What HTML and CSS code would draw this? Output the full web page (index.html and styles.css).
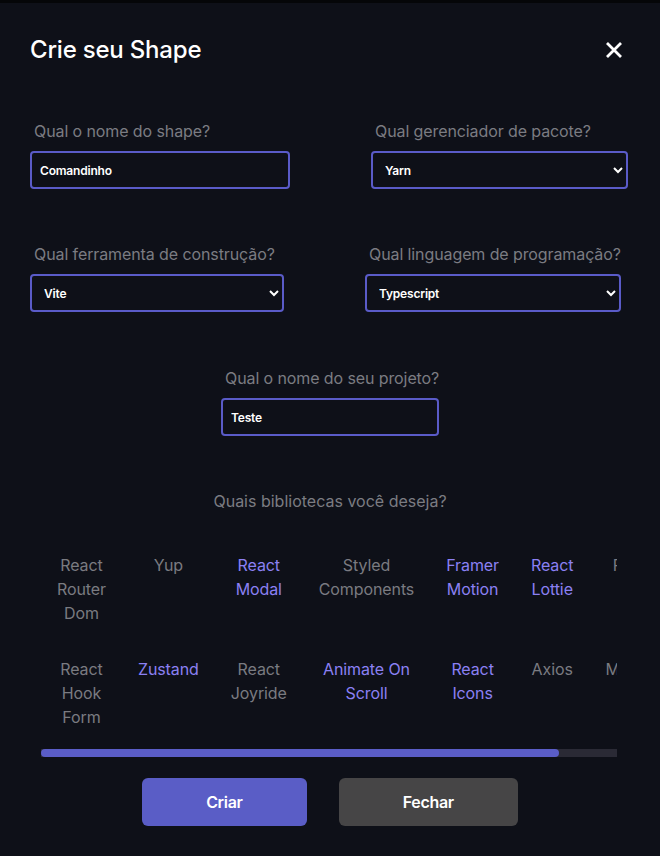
FILE: index.html
```html
<!DOCTYPE html>
<html lang="pt-BR">
<head>
<meta charset="utf-8">
<title>Crie seu Shape</title>
<link rel="stylesheet" href="styles.css">
</head>
<body>
<div class="modal">
  <header class="header">
    <h1 class="title">Crie seu Shape</h1>
    <button class="close" aria-label="Fechar">
      <svg width="18" height="18" viewBox="0 0 18 18"><path d="M2 2 L16 16 M16 2 L2 16" stroke="#fff" stroke-width="2.8" stroke-linecap="butt"/></svg>
    </button>
  </header>

  <div class="row row-1">
    <div class="field w260">
      <label class="label">Qual o nome do shape?</label>
      <input class="control" type="text" value="Comandinho">
    </div>
    <div class="field w257">
      <label class="label">Qual gerenciador de pacote?</label>
      <select class="control"><option>Yarn</option><option>npm</option></select>
    </div>
  </div>

  <div class="row row-2">
    <div class="field w254">
      <label class="label">Qual ferramenta de construção?</label>
      <select class="control"><option>Vite</option><option>CRA</option></select>
    </div>
    <div class="field w256">
      <label class="label">Qual linguagem de programação?</label>
      <select class="control"><option>Typescript</option><option>Javascript</option></select>
    </div>
  </div>

  <div class="row row-3">
    <div class="field w218">
      <label class="label">Qual o nome do seu projeto?</label>
      <input class="control" type="text" value="Teste">
    </div>
  </div>

  <p class="libs-title">Quais bibliotecas você deseja?</p>

  <div class="libs">
    <div class="libs-viewport">
      <div class="libs-grid">
        <span class="lib">React Router Dom</span>
        <span class="lib">React Hook Form</span>
        <span class="lib">Yup</span>
        <span class="lib active">Zustand</span>
        <span class="lib active">React Modal</span>
        <span class="lib">React Joyride</span>
        <span class="lib">Styled Components</span>
        <span class="lib active">Animate On Scroll</span>
        <span class="lib active">Framer Motion</span>
        <span class="lib active">React Icons</span>
        <span class="lib active">React Lottie</span>
        <span class="lib">Axios</span>
        <span class="lib">Redux</span>
        <span class="lib">Moment</span>
      </div>
    </div>
    <div class="scrollbar"><div class="scrollbar-thumb" style="width: 518px"></div></div>
  </div>

  <div class="actions">
    <button class="btn btn-primary">Criar</button>
    <button class="btn btn-secondary">Fechar</button>
  </div>
</div>
</body>
</html>
```

FILE: styles.css
```css
html, body {
  margin: 0;
  padding: 0;
  background: #0e1018;
}

body {
  border-top: 3px solid #050608;
  font-family: Inter, "Noto Sans", sans-serif;
  color-scheme: dark;
}

.modal {
  width: 660px;
  height: 853px;
  display: flex;
  flex-direction: column;
}

.header {
  display: flex;
  justify-content: space-between;
  align-items: center;
  height: 30px;
  padding: 32px 37px 0 30px;
}

.title {
  margin: 0;
  font-family: Inter, "Noto Sans", sans-serif;
  font-weight: 500;
  font-size: 24px;
  color: #ffffff;
  line-height: 30px;
  letter-spacing: -0.2px;
}

.close {
  background: none;
  border: none;
  padding: 0;
  width: 18px;
  height: 18px;
  display: flex;
  cursor: pointer;
}

.row {
  display: flex;
  gap: 81px;
  padding-left: 30px;
}

.row-1 { margin-top: 56px; }
.row-2 { margin-top: 55px; }
.row-3 { margin-top: 56px; justify-content: center; padding-left: 0; }

.field {
  display: flex;
  flex-direction: column;
  gap: 10px;
}

.w260 { width: 260px; }
.w257 { width: 257px; }
.w254 { width: 254px; }
.w256 { width: 256px; }
.w218 { width: 218px; }

.label {
  padding-left: 4px;
  font-size: 16px;
  line-height: 20px;
  color: #7b7c82;
  white-space: nowrap;
  letter-spacing: -0.1px;
}

.control {
  box-sizing: border-box;
  width: 100%;
  height: 38px;
  margin: 0;
  padding: 0 8px;
  border: 2px solid #5a5bc8;
  border-radius: 4px;
  background: #0e1018;
  color: #ffffff;
  font-family: Inter, "Noto Sans", sans-serif;
  font-weight: 600;
  font-size: 12px;
  letter-spacing: -0.2px;
  outline: none;
}

.libs-title {
  margin: 55px 0 0;
  text-align: center;
  font-size: 16px;
  line-height: 20px;
  color: #7b7c82;
}

.libs {
  margin: 42px 43px 0 41px;
  display: flex;
  flex-direction: column;
  gap: 20px;
}

.libs-viewport {
  overflow: hidden;
}

.libs-grid {
  display: grid;
  grid-template-rows: auto auto;
  grid-auto-flow: column;
  grid-auto-columns: min-content;
  row-gap: 32px;
  width: max-content;
}

.lib {
  padding: 0 16px;
  text-align: center;
  font-size: 16px;
  line-height: 24px;
  color: #7a7b81;
  cursor: pointer;
  letter-spacing: -0.1px;
}

.lib.active {
  color: #8b80f3;
}

.scrollbar {
  height: 8px;
  background: #2a2a35;
}

.scrollbar-thumb {
  height: 8px;
  border-radius: 4px;
  background: #5a5dc7;
}

.actions {
  display: flex;
  justify-content: center;
  gap: 32px;
  margin-top: 21px;
}

.btn {
  height: 48px;
  padding: 0 64px;
  border: none;
  border-radius: 6px;
  font-family: Inter, "Noto Sans", sans-serif;
  font-weight: 600;
  font-size: 16px;
  letter-spacing: -0.3px;
  color: #ffffff;
  cursor: pointer;
}

.btn-primary {
  background: #5a5dc6;
}

.btn-secondary {
  background: #464546;
}
```
